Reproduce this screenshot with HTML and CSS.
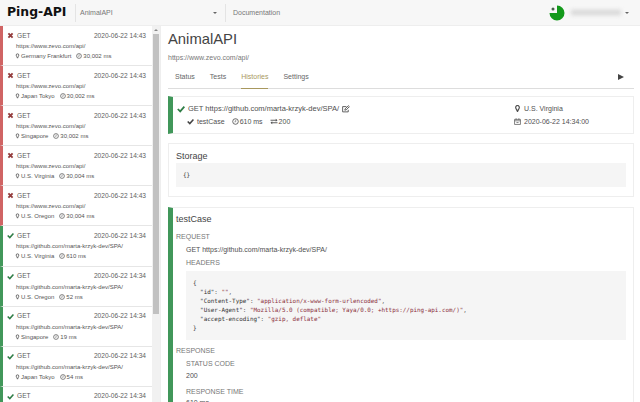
FILE: index.html
```
<!DOCTYPE html>
<html lang="en">
<head>
<meta charset="utf-8">
<title>Ping-API</title>
<link rel="stylesheet" href="styles.css">
</head>
<body>
<svg class="defs" width="0" height="0">
  <symbol id="x" viewBox="0 0 10 10"><path d="M2 2l6 6M8 2L2 8" stroke="currentColor" stroke-width="2.7"/></symbol>
  <symbol id="check" viewBox="0 0 10 10"><path d="M1 5l3 3 5.2-6" fill="none" stroke="currentColor" stroke-width="2.2"/></symbol>
  <symbol id="pin" viewBox="0 0 10 10"><path d="M5 .7a2.6 2.6 0 0 1 2.6 2.7C7.600 5 6 6.500 5 9.300 4 6.500 2.400 5 2.400 3.400A2.600 2.600 0 0 1 5 .7z" fill="none" stroke="currentColor" stroke-width="1.700"/></symbol>
  <symbol id="clock" viewBox="0 0 10 10"><circle cx="5" cy="5" r="4" fill="none" stroke="currentColor" stroke-width="1.200"/><path d="M5.300 2.500V5.500H3.500" fill="none" stroke="currentColor" stroke-width=".8"/></symbol>
  <symbol id="swap" viewBox="0 0 10 10"><path d="M0 3.200h8M2 6.800h8" stroke="currentColor" stroke-width="1.300"/><path d="M7.500 1l2.500 2.200-2.500 2.200zM2.500 4.600L0 6.800 2.500 9z" fill="currentColor"/></symbol>
  <symbol id="edit" viewBox="0 0 10 10"><path d="M7.800 6v2.600H.8V2h4.700" fill="none" stroke="currentColor" stroke-width="1.100"/><path d="M3.500 6.500l.4-1.700L8 .9l1.200 1.200-4 4z" fill="none" stroke="currentColor" stroke-width="1.100"/></symbol>
  <symbol id="cal" viewBox="0 0 10 10"><path d="M.8 2h8.400v7.200H.8zM.8 4h8.400M3 .3v2.200M7 .3v2.200M3.500 6.500h3" fill="none" stroke="currentColor" stroke-width="1"/></symbol>
</svg>
<header class="topbar">
  <div class="logo">Ping-API</div>
  <div class="project"><span>AnimalAPI</span><i class="caret"></i></div>
  <a class="docs">Documentation</a>
  <div class="account">
    <svg class="avatar" viewBox="0 0 16 16"><path d="M8 8V.5A7.500 7.500 0 1 1 .5 8z" fill="#139a1b"/><circle cx="4" cy="4" r="1.500" fill="#47604a"/></svg>
    <span class="user"></span><i class="caret"></i>
  </div>
</header>
<div class="body">
  <aside class="sidebar">
    <div class="list">
      <div class="row fail"><div class="top"><svg><use href="#x"/></svg><span>GET</span><time>2020-06-22 14:43</time></div><div class="url">https://www.zevo.com/api/</div><div class="meta"><svg class="p"><use href="#pin"/></svg>Germany Frankfurt<svg class="c"><use href="#clock"/></svg>30,002 ms</div></div>
      <div class="row fail"><div class="top"><svg><use href="#x"/></svg><span>GET</span><time>2020-06-22 14:43</time></div><div class="url">https://www.zevo.com/api/</div><div class="meta"><svg class="p"><use href="#pin"/></svg>Japan Tokyo<svg class="c"><use href="#clock"/></svg>30,002 ms</div></div>
      <div class="row fail"><div class="top"><svg><use href="#x"/></svg><span>GET</span><time>2020-06-22 14:43</time></div><div class="url">https://www.zevo.com/api/</div><div class="meta"><svg class="p"><use href="#pin"/></svg>Singapore<svg class="c"><use href="#clock"/></svg>30,002 ms</div></div>
      <div class="row fail"><div class="top"><svg><use href="#x"/></svg><span>GET</span><time>2020-06-22 14:43</time></div><div class="url">https://www.zevo.com/api/</div><div class="meta"><svg class="p"><use href="#pin"/></svg>U.S. Virginia<svg class="c"><use href="#clock"/></svg>30,004 ms</div></div>
      <div class="row fail"><div class="top"><svg><use href="#x"/></svg><span>GET</span><time>2020-06-22 14:43</time></div><div class="url">https://www.zevo.com/api/</div><div class="meta"><svg class="p"><use href="#pin"/></svg>U.S. Oregon<svg class="c"><use href="#clock"/></svg>30,004 ms</div></div>
      <div class="row ok"><div class="top"><svg><use href="#check"/></svg><span>GET</span><time>2020-06-22 14:34</time></div><div class="url">https://github.com/marta-krzyk-dev/SPA/</div><div class="meta"><svg class="p"><use href="#pin"/></svg>U.S. Virginia<svg class="c"><use href="#clock"/></svg>610 ms</div></div>
      <div class="row ok"><div class="top"><svg><use href="#check"/></svg><span>GET</span><time>2020-06-22 14:34</time></div><div class="url">https://github.com/marta-krzyk-dev/SPA/</div><div class="meta"><svg class="p"><use href="#pin"/></svg>U.S. Oregon<svg class="c"><use href="#clock"/></svg>52 ms</div></div>
      <div class="row ok"><div class="top"><svg><use href="#check"/></svg><span>GET</span><time>2020-06-22 14:34</time></div><div class="url">https://github.com/marta-krzyk-dev/SPA/</div><div class="meta"><svg class="p"><use href="#pin"/></svg>Singapore<svg class="c"><use href="#clock"/></svg>19 ms</div></div>
      <div class="row ok"><div class="top"><svg><use href="#check"/></svg><span>GET</span><time>2020-06-22 14:34</time></div><div class="url">https://github.com/marta-krzyk-dev/SPA/</div><div class="meta"><svg class="p"><use href="#pin"/></svg>Japan Tokyo<svg class="c"><use href="#clock"/></svg>54 ms</div></div>
      <div class="row ok"><div class="top"><svg><use href="#check"/></svg><span>GET</span><time>2020-06-22 14:34</time></div></div>
    </div>
    <div class="scroll"><i class="up"></i><div class="thumb"></div></div>
  </aside>
  <main class="main">
    <h1>AnimalAPI</h1>
    <div class="base">https://www.zevo.com/api/</div>
    <nav class="tabs"><a>Status</a><a>Tests</a><a class="active">Histories</a><a>Settings</a><i class="play"></i></nav>
    <section class="card summary">
      <div class="left">
        <div class="req"><svg class="tick"><use href="#check"/></svg><span>GET https://github.com/marta-krzyk-dev/SPA/</span><svg class="edit"><use href="#edit"/></svg></div>
        <div class="stats"><svg class="tick"><use href="#check"/></svg><span>testCase</span><svg class="clk"><use href="#clock"/></svg><span>610 ms</span><svg class="swp"><use href="#swap"/></svg><span>200</span></div>
      </div>
      <div class="right">
        <div><svg><use href="#pin"/></svg>U.S. Virginia</div>
        <div><svg><use href="#cal"/></svg>2020-06-22 14:34:00</div>
      </div>
    </section>
    <section class="card storage"><h2>Storage</h2><pre>{}</pre></section>
    <section class="card case">
      <h2>testCase</h2>
      <h3>REQUEST</h3>
      <p class="get">GET https://github.com/marta-krzyk-dev/SPA/</p>
      <h4>HEADERS</h4>
<pre>{
  "id": <b>""</b>,
  "Content-Type": <b>"application/x-www-form-urlencoded"</b>,
  "User-Agent": <b>"Mozilla/5.0 (compatible; Yaya/0.0; +https://ping-api.com/)"</b>,
  "accept-encoding": <b>"gzip, deflate"</b>
}</pre>
      <h3 class="resp">RESPONSE</h3>
      <h4>STATUS CODE</h4>
      <p class="code">200</p>
      <h4 class="rt">RESPONSE TIME</h4>
      <p class="time">610 ms</p>
    </section>
  </main>
</div>
</body>
</html>
```
FILE: styles.css
```
* { box-sizing: border-box; }
body { margin: 0; width: 640px; height: 402px; overflow: hidden; display: flex; flex-direction: column; background: #fff; color: #505050; font: 7px/10px "Liberation Sans", sans-serif; }
h1, h2, h3, h4, p, pre { margin: 0; font-weight: 400; }
svg { flex: none; width: 6px; height: 6px; }
.defs { position: absolute; width: 0; height: 0; }

.topbar { flex: none; height: 26px; display: flex; align-items: center; background: #f7f7f7; border-bottom: 1px solid #eee; color: #777; }
.logo { width: 75px; padding: 0 0 1px 7px; color: #111; font: bold 12.400px/20px "DejaVu Sans", sans-serif; }
.project { width: 151px; height: 18px; display: flex; align-items: center; justify-content: space-between; padding: 0 8px 0 4px; border-left: 1px solid #e4e4e4; border-right: 1px solid #e4e4e4; }
.caret { border: 2px solid transparent; border-top-color: #666; border-bottom: 0; }
.docs { padding-left: 7px; }
.account { display: flex; align-items: center; margin-left: auto; padding-right: 11px; }
.avatar { width: 16px; height: 16px; }
.user { width: 50px; height: 5px; margin: 0 4px 0 6px; background: #d5d5d5; filter: blur(2px); }

.body { flex: 1; min-height: 0; display: flex; }
.sidebar { flex: none; width: 161px; display: flex; overflow: hidden; border-right: 1px solid #eee; }
.list { width: 152px; }
.row { height: 40.100px; padding: 4px 6px 0 4px; border-left: 3px solid #d06464; border-bottom: 1px solid #e6e6e6; font-size: 6px; color: #555; }
.row.ok { border-left-color: #41975a; }
.top { display: flex; align-items: center; height: 11px; font-size: 6.600px; color: #606060; }
.top svg { width: 7px; height: 7px; margin-right: 3px; color: #933c3c; }
.ok .top svg { color: #2f7d46; }
.top time { margin-left: auto; }
.url { padding-left: 9px; }
.meta { display: flex; align-items: center; padding-left: 8px; }
.meta .p { width: 5px; height: 6px; margin-right: 1px; }
.meta .c { margin: 0 1px 0 5px; }
.scroll { width: 8px; background: #f1f1f1; display: flex; flex-direction: column; align-items: center; }
.up { margin: 3px 0; border: 2px solid transparent; border-bottom-color: #888; border-top: 0; }
.thumb { width: 6px; height: 280px; background: #c1c1c1; }

.main { flex: 1; min-width: 0; padding: 4px 6px 0 7px; }
h1 { font-size: 14.800px; line-height: 18px; color: #444; }
.base { margin-top: 5px; color: #777; }
.tabs { display: flex; height: 26px; padding-left: 7px; border-bottom: 1px solid #ddd; color: #666; gap: 15px; }
.tabs a { height: 26px; padding-top: 9px; }
.tabs .active { color: #a8985e; border-bottom: 1px solid #a8985e; }
.play { margin: 11px 10px 0 auto; width: 0; height: 6px; border: 3px solid transparent; border-left: 6px solid #444; border-right: 0; }

.card { border: 1px solid #eee; background: #fff; }
.summary { height: 38px; margin-top: 7px; border-left: 5px solid #41975a; display: flex; justify-content: space-between; padding-top: 5px; }
.req, .stats { display: flex; align-items: center; }
.req { height: 13px; padding-left: 4px; font-size: 7.500px; }
.tick { width: 8px; height: 8px; margin-right: 3px; color: #2f7d46; }
.edit { width: 8px; height: 8px; margin-left: 3px; }
.stats { height: 13px; padding-left: 14px; }
.stats .tick { width: 7px; height: 7px; color: #444; }
.clk { width: 7px; height: 7px; margin: 0 1px 0 7px; }
.swp { width: 8px; height: 7px; margin: 0 1px 0 7px; }
.right { width: 119px; }
.right div { display: flex; align-items: center; height: 13px; }
.right svg { width: 7px; height: 7px; margin-right: 3px; }
.storage { height: 54px; margin-top: 9px; padding: 6px 7px 0; }
h2 { font-size: 9px; line-height: 12px; color: #444; }
pre { background: #f5f5f5; color: #333; font: 5.920px/9px "DejaVu Sans Mono", monospace; }
pre b { font-weight: 400; color: #8b2f3c; }
.storage pre { height: 24px; margin-top: 1px; padding: 8px 7px; }
.case { height: 205px; margin-top: 10px; padding: 5px 7px 0 3px; border-left: 5px solid #41975a; }
h3, h4 { font-size: 7px; line-height: 10px; color: #777; }
.case h3 { margin-top: 7px; }
.case .get, .case h4, .case .code, .case .time { padding-left: 10px; }
.get { margin-top: 3px; }
.case h4 { margin-top: 3px; }
.case pre { height: 69px; margin: 3px 0 0 10px; padding: 8px 7px 6px; }
.case .resp { margin-top: 6px; }
.code { margin-top: 2px; }
.case .rt { margin-top: 6px; }
.time { margin-top: 1px; }
```
